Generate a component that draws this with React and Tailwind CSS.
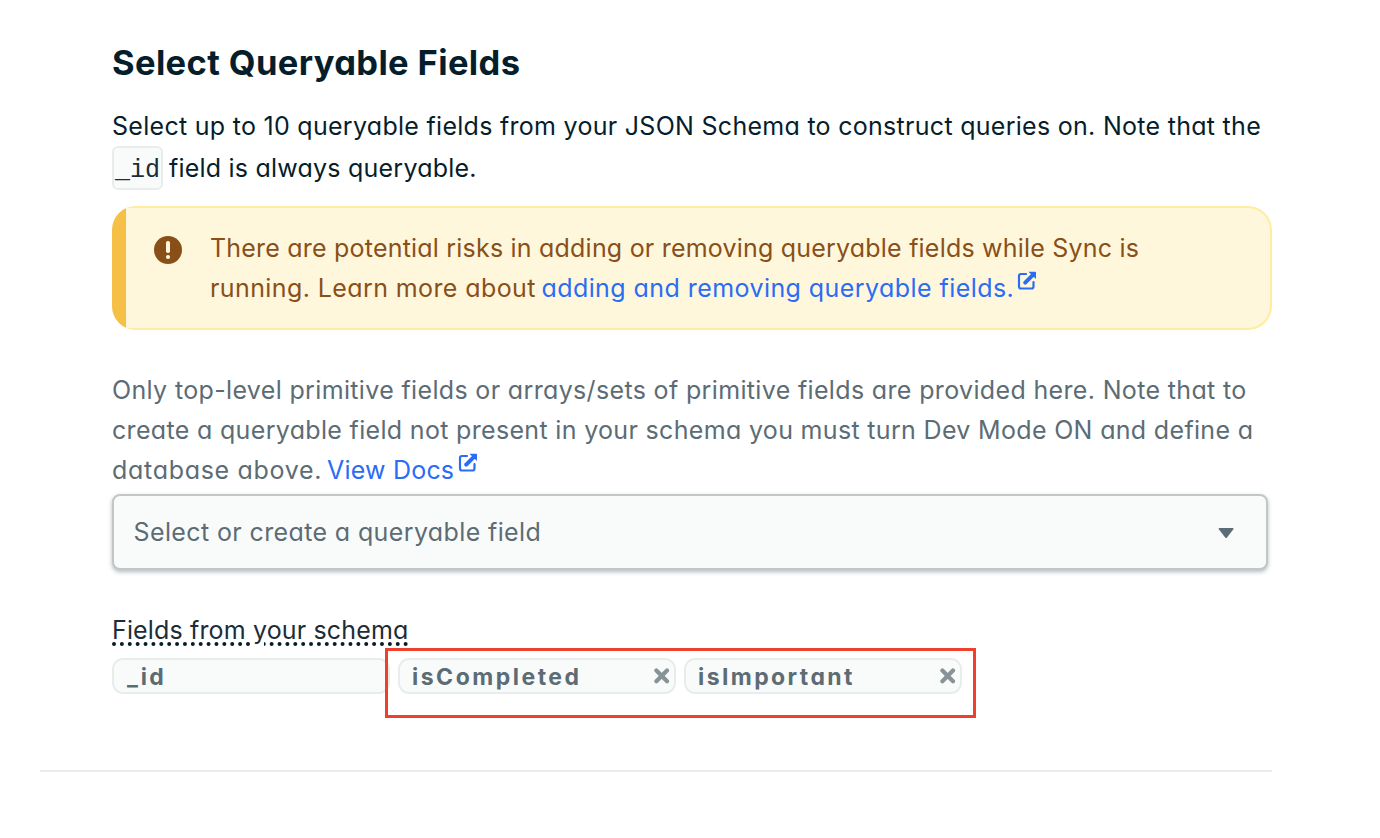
import React from "react";

function ExternalIcon({ className }) {
  return (
    <svg className={className} width="20" height="20" viewBox="0 0 20 20" fill="none">
      <path d="M9 3H4a2 2 0 0 0-2 2v10.5a2 2 0 0 0 2 2h10.5a2 2 0 0 0 2-2V11" stroke="#2b6cf5" strokeWidth="2.2" strokeLinecap="round" />
      <path d="M8.2 11.6L15.5 4.3" stroke="#2b6cf5" strokeWidth="4" strokeLinecap="round" />
      <path d="M11.4 0.8H18.2a.8.8 0 0 1 .8.8V8Z" fill="#2b6cf5" />
    </svg>
  );
}

function CloseIcon() {
  return (
    <svg width="16" height="16" viewBox="0 0 16 16" fill="none">
      <path d="M2.4 2.6L13 13.2M13 2.6L2.4 13.2" stroke="#889397" strokeWidth="4.2" strokeLinecap="round" />
    </svg>
  );
}

function Chip({ label, className, closable }) {
  return (
    <div className="flex h-9 w-[278px] items-center justify-between rounded-[11px] border-2 border-[#e8edeb] bg-[#f9fbfa] pr-1 pl-3">
      <span className={`mt-[2px] ${className}`}>{label}</span>
      {closable && <CloseIcon />}
    </div>
  );
}

export default function App() {
  return (
    <main className="relative h-[838px] w-[1380px] overflow-hidden bg-white pt-[43px] pl-10 font-['Inter',sans-serif] text-[25px] leading-10 whitespace-nowrap text-[#061e2b] [font-feature-settings:'cv11']">
      <section className="w-[1232px] border-b-2 border-[#e8edeb] pb-[76px] pl-[72px]">
        <h1 className="flex h-[62px] text-[34.5px] leading-10 font-bold tracking-[0.37px]">Select Queryable Fields</h1>
        <div className="leading-[42px]">
          <p className="h-[42px] tracking-[0.285px]">Select up to 10 queryable fields from your JSON Schema to construct queries on. Note that the</p>
          <p className="flex h-[42px]">
            <code className="-mt-px mr-[6px] flex h-11 w-[51px] justify-center rounded-md border-2 border-[#e8edeb] bg-[#f9fbfa] pt-[3px] font-['Liberation_Mono',monospace] text-[25px] leading-10 text-[#1c2d38]">_id</code>
            <span className="tracking-[0.22px]">field is always queryable.</span>
          </p>
        </div>
        <div className="mt-[17px] flex h-[124px] overflow-hidden rounded-[24px] bg-[#fef7db] text-[#8a4f19]">
          <div className="w-[14px] bg-[#f5c045]" />
          <div className="flex flex-1 rounded-r-[24px] border-2 border-l-0 border-[#ffec9e] pt-5 pl-7">
            <svg className="mt-2 mr-7" width="28" height="28" viewBox="0 0 28 28">
              <circle cx="14" cy="14" r="14" fill="#8a4f19" />
              <rect x="12" y="5" width="4" height="12" rx="1.8" fill="#fef7db" />
              <circle cx="14" cy="21" r="2.1" fill="#fef7db" />
            </svg>
            <div>
              <p className="tracking-[0.207px]">There are potential risks in adding or removing queryable fields while Sync is</p>
              <p className="flex">
                <span className="mr-[5.6px] tracking-[0.4px]">running. Learn more about</span>
                <a className="flex text-[#2b6cf5]"><span className="tracking-[0.435px]">adding and removing queryable fields.</span><ExternalIcon className="mt-[3px] ml-[3px]" /></a>
              </p>
            </div>
          </div>
        </div>
        <div className="mt-10 text-[#5c6c75]">
          <p className="tracking-[0.348px]">Only top-level primitive fields or arrays/sets of primitive fields are provided here. Note that to</p>
          <p className="tracking-[0.327px]">create a queryable field not present in your schema you must turn Dev Mode ON and define a</p>
          <p className="flex">
            <span className="mr-[4.8px] tracking-[0.7px]">database above.</span>
            <a className="flex text-[#2b6cf5]"><span className="tracking-[0.2px]">View Docs</span><ExternalIcon className="mt-[3px] ml-[4px]" /></a>
          </p>
        </div>
        <div className="mt-1 flex h-[76px] w-[1156px] items-center justify-between rounded-[8px] border-2 border-[#c1c7c6] bg-[#f9fbfa] pr-8 pl-[19.5px] text-[#5c6c75] shadow-[0_2px_4px_rgba(0,30,43,0.3)]">
          <span className="tracking-[0.38px]">Select or create a queryable field</span>
          <svg className="mt-[2px]" width="16" height="11" viewBox="0 0 16 11"><path d="M1.4 0H14.8Q16.1.3 15.2 1.5L9 9.4Q8.1 10.4 7.2 9.4L1 1.5Q.1.3 1.4 0Z" fill="#5c6c75" /></svg>
        </div>
        <div className="mt-10 flex text-[#1c2d38]">
          <span className="tracking-[0.15px] underline decoration-[#061e2b] decoration-dotted decoration-4 underline-offset-[3px]">Fields from your schema</span>
        </div>
        <div className="mt-2 flex gap-2 text-[23px] font-bold text-[#5c6c75]">
          <Chip label="_id" className="ml-px tracking-[2.4px]" />
          <Chip label="isCompleted" className="tracking-[2.5px]" closable />
          <Chip label="isImportant" className="tracking-[2.4px]" closable />
        </div>
      </section>
      <div className="absolute top-[648px] left-[385px] h-[70px] w-[591px] border-3 border-[#ee402a]" />
    </main>
  );
}
